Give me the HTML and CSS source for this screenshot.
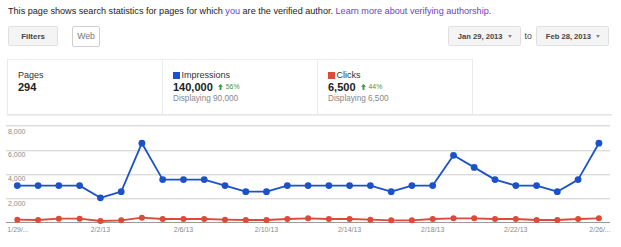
FILE: index.html
```html
<!DOCTYPE html>
<html>
<head>
<meta charset="utf-8">
<link rel="stylesheet" href="styles.css">
</head>
<body>
<p class="intro">This page shows search statistics for pages for which <a class="link" href="#">you</a> are the verified author. <a class="link" href="#">Learn more about verifying authorship.</a></p>
<div class="toolbar">
  <div class="left-tools">
    <button class="btn btn-filters">Filters</button>
    <button class="btn btn-web">Web</button>
  </div>
  <div class="right-tools">
    <button class="btn btn-date">Jan 29, 2013 <span class="caret"></span></button>
    <span class="to">to</span>
    <button class="btn btn-date">Feb 28, 2013 <span class="caret"></span></button>
  </div>
</div>
<div class="stats">
  <div class="cell">
    <div class="label">Pages</div>
    <div class="num">294</div>
  </div>
  <div class="cell">
    <div class="label"><span class="sq sq-blue"></span>Impressions</div>
    <div class="num">140,000 <span class="delta"><svg class="arrow" viewBox="0 0 6 7"><path d="M3 0 L6 3.2 H4.1 V7 H1.9 V3.2 H0 Z"/></svg>56%</span></div>
    <div class="sub">Displaying 90,000</div>
  </div>
  <div class="cell cell-last">
    <div class="label"><span class="sq sq-red"></span>Clicks</div>
    <div class="num">6,500 <span class="delta"><svg class="arrow" viewBox="0 0 6 7"><path d="M3 0 L6 3.2 H4.1 V7 H1.9 V3.2 H0 Z"/></svg>44%</span></div>
    <div class="sub">Displaying 6,500</div>
  </div>
</div>
<svg class="chart" width="621" height="127" viewBox="0 0 621 127">
  <defs>
    <marker id="dotB" viewBox="0 0 8 8" refX="4" refY="4" markerWidth="8" markerHeight="8" markerUnits="userSpaceOnUse"><circle cx="4" cy="4" r="3.4" fill="#1c52c9"/></marker>
    <marker id="dotR" viewBox="0 0 8 8" refX="4" refY="4" markerWidth="8" markerHeight="8" markerUnits="userSpaceOnUse"><circle cx="4" cy="4" r="3" fill="#dc4a38"/></marker>
  </defs>
  <g class="grid">
    <line x1="6" y1="6.5" x2="610" y2="6.5"/>
    <line x1="6" y1="31.5" x2="610" y2="31.5"/>
    <line x1="6" y1="55.5" x2="610" y2="55.5"/>
    <line x1="6" y1="79.5" x2="610" y2="79.5"/>
  </g>
  <g class="grid-shadow">
    <line x1="6" y1="7.5" x2="610" y2="7.5"/>
    <line x1="6" y1="32.5" x2="610" y2="32.5"/>
    <line x1="6" y1="56.5" x2="610" y2="56.5"/>
    <line x1="6" y1="80.5" x2="610" y2="80.5"/>
  </g>
  <line class="baseline" x1="6" y1="103.5" x2="610" y2="103.5"/>
  <g class="ylab">
    <text x="8" y="14.5">8,000</text>
    <text x="8" y="37.5">6,000</text>
    <text x="8" y="61.5">4,000</text>
    <text x="8" y="86.5">2,000</text>
  </g>
  <g class="xlab">
    <text x="18" y="112.5">1/29/...</text>
    <text x="100.4" y="112.5">2/2/13</text>
    <text x="183.5" y="112.5">2/6/13</text>
    <text x="266.5" y="112.5">2/10/13</text>
    <text x="349.6" y="112.5">2/14/13</text>
    <text x="432.7" y="112.5">2/18/13</text>
    <text x="515.8" y="112.5">2/22/13</text>
    <text x="600" y="112.5">2/26/...</text>
  </g>
  <polyline class="series series-red" points="17.3,100.7 38.1,101 58.8,99.7 79.6,99.7 100.4,102 121.2,101.3 141.9,98.7 162.7,100 183.5,100 204.2,100 225.0,100.7 245.8,101 266.5,101 287.3,100 308.1,99.3 328.9,100 349.6,100 370.4,100.7 391.2,101.3 411.9,101.3 432.7,100 453.5,99.3 474.2,99.3 495.0,100 515.8,100 536.6,101 557.3,101 578.1,100 598.9,99.3"/>
  <polyline class="series series-blue" points="17.3,66.6 38.1,66.6 58.8,66.6 79.6,66.6 100.4,78.8 121.2,72.7 141.9,24.2 162.7,60.6 183.5,60.6 204.2,60.6 225.0,66.6 245.8,72.7 266.5,72.7 287.3,66.6 308.1,66.6 328.9,66.6 349.6,66.6 370.4,66.6 391.2,72.7 411.9,66.6 432.7,66.6 453.5,36.3 474.2,48.4 495.0,60.6 515.8,66.6 536.6,66.6 557.3,72.7 578.1,60.6 598.9,24.2"/>
</svg>
</body>
</html>
```
FILE: styles.css
```css
html, body {
  margin: 0;
  padding: 0;
  background: #fff;
}
body {
  font-family: "Liberation Sans", Arial, sans-serif;
  color: #222;
  width: 621px;
  height: 247px;
  overflow: hidden;
}
.intro {
  margin: 0;
  padding: 6px 8px 0;
  font-size: 9.1px;
  line-height: 10px;
  height: 10px;
  white-space: nowrap;
}
.link {
  color: #6a3fc6;
  text-decoration: none;
}
.toolbar {
  display: flex;
  justify-content: space-between;
  align-items: center;
  margin-top: 10px;
  padding: 0 12px 0 8px;
  height: 20px;
}
.left-tools, .right-tools {
  display: flex;
  align-items: center;
}
.btn {
  font-family: "Liberation Sans", Arial, sans-serif;
  box-sizing: border-box;
  height: 20px;
  margin: 0;
  padding: 0;
  border-radius: 2px;
  display: flex;
  align-items: center;
  justify-content: center;
}
.btn-filters {
  width: 50px;
  background: #f4f4f4;
  border: 1px solid #e0e0e0;
  color: #444;
  font-weight: bold;
  font-size: 7.9px;
}
.btn-web {
  margin-left: 14px;
  width: 28px;
  background: #fff;
  border: 1px solid #cfcfcf;
  color: #777;
  font-size: 8.7px;
  height: 21px;
}
.btn-date {
  background: #f4f4f4;
  border: 1px solid #e0e0e0;
  color: #444;
  font-weight: bold;
  font-size: 7.6px;
  padding: 0 8px 0 9px;
  gap: 5px;
}
.caret {
  width: 0;
  height: 0;
  border-left: 2.5px solid transparent;
  border-right: 2.5px solid transparent;
  border-top: 3px solid #888;
}
.to {
  font-size: 8.7px;
  color: #444;
  margin: 0 4px 0 4px;
}
.stats {
  display: flex;
  margin: 13px 9px 0 7px;
  height: 56px;
  box-sizing: border-box;
  border-bottom: 1px solid #e6e6e6;
  box-shadow: 0 1px 1px rgba(0, 0, 0, 0.05);
}
.cell {
  box-sizing: border-box;
  width: 155px;
  border-top: 1px solid #eeeeee;
  border-left: 1px solid #eaeaea;
  padding: 10px 0 0 10px;
}
.cell-last {
  width: 156px;
  border-right: 1px solid #eaeaea;
}
.label {
  font-size: 9px;
  line-height: 11px;
  color: #333;
  display: flex;
  align-items: center;
}
.sq {
  display: inline-block;
  width: 7px;
  height: 7px;
  margin-right: 1.5px;
}
.sq-blue { background: #1a52cc; }
.sq-red { background: #dd4b39; }
.num {
  font-size: 11px;
  font-weight: bold;
  line-height: 12px;
  color: #222;
  display: flex;
  align-items: center;
  white-space: pre;
}
.delta {
  font-size: 6.8px;
  font-weight: normal;
  color: #3a9a4c;
  display: inline-flex;
  align-items: center;
  margin-left: 2px;
}
.arrow {
  width: 5px;
  height: 6px;
  fill: #3a9a4c;
  margin-right: 3px;
}
.sub {
  font-size: 8.2px;
  line-height: 11px;
  color: #888;
}
.chart {
  display: block;
  margin-top: 4px;
}
.grid line {
  stroke: #dcdcdc;
  stroke-width: 1;
}
.grid-shadow line {
  stroke: #f1f1f1;
  stroke-width: 1;
}
.baseline {
  stroke: #9a9a9a;
  stroke-width: 1;
}
.ylab text {
  font-family: "Liberation Sans", Arial, sans-serif;
  font-size: 7px;
  fill: #8a8a8a;
}
.xlab text {
  font-family: "Liberation Sans", Arial, sans-serif;
  font-size: 7px;
  fill: #8a8a8a;
  text-anchor: middle;
}
.series {
  fill: none;
  stroke-width: 1.8;
  stroke-linejoin: round;
}
.series-blue {
  stroke: #1c52c9;
  marker-start: url(#dotB);
  marker-mid: url(#dotB);
  marker-end: url(#dotB);
}
.series-red {
  stroke: #dc4a38;
  marker-start: url(#dotR);
  marker-mid: url(#dotR);
  marker-end: url(#dotR);
}
```
